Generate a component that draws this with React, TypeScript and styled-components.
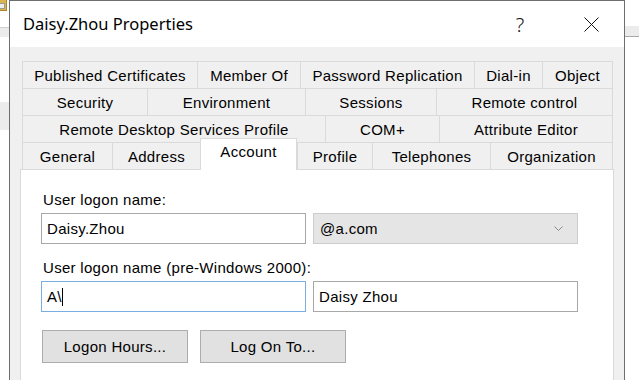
import React from 'react';
import styled, { createGlobalStyle } from 'styled-components';

const GlobalStyle = createGlobalStyle`
  html, body {
    margin: 0;
    padding: 0;
    background: #ffffff;
    overflow: hidden;
  }
`;

const Desktop = styled.div`
  position: relative;
  width: 639px;
  height: 380px;
  overflow: hidden;
  background: #ffffff;
  font-family: 'Liberation Sans', Arial, sans-serif;
`;

/* bits of the windows behind the dialog */
const BackIcon = styled.div`
  position: absolute;
  left: -4px;
  top: -2px;
  width: 11px;
  height: 13px;
  background: #d8b54e;
  border: 1px solid #a98523;
  box-sizing: border-box;

  &:after {
    content: '';
    position: absolute;
    left: 2px;
    top: 4px;
    width: 4px;
    height: 4px;
    background: #eeeeee;
    border: 1px solid #9a9a9a;
  }
`;

const BackBand = styled.div<{ $left: number; $width: number; $top: number; $height: number; $line?: 'top' | 'bottom' }>`
  position: absolute;
  left: ${p => p.$left}px;
  top: ${p => p.$top}px;
  width: ${p => p.$width}px;
  height: ${p => p.$height}px;
  background: #ececec;
  box-sizing: border-box;
  ${p => (p.$line === 'top' ? 'border-top: 1px solid #cfcfcf;' : '')}
  ${p => (p.$line === 'bottom' ? 'border-bottom: 1px solid #a9a9a9;' : '')}
`;

const Dialog = styled.div`
  position: absolute;
  left: 9px;
  top: 0;
  width: 616px;
  height: 420px;
  box-sizing: border-box;
  border: 1px solid #6e6e6e;
  background: #f0f0f0;
  display: flex;
  flex-direction: column;
`;

const TitleBar = styled.div`
  height: 46px;
  flex-shrink: 0;
  background: #ffffff;
  display: flex;
  align-items: center;
  padding-left: 13px;
`;

const Title = styled.div`
  flex: 1;
  font-family: 'Noto Sans', 'Open Sans', sans-serif;
  font-size: 16.5px;
  color: #000000;
  margin-top: -1px;
`;

const CaptionButton = styled.div`
  height: 46px;
  display: flex;
  align-items: center;
  justify-content: center;
  font-family: 'Noto Sans', sans-serif;
  font-size: 20px;
  font-weight: 300;
  color: #111111;
`;

const HelpButton = styled(CaptionButton)`
  width: 44px;
  margin-right: 27px;
`;

const CloseButton = styled(CaptionButton)`
  width: 44px;
  margin-right: 11px;
`;

const Body = styled.div`
  flex: 1;
  padding: 14px 10px 0 10px;
  display: flex;
  flex-direction: column;
`;

const TabStrip = styled.div`
  margin-left: 2px;
  display: flex;
  flex-direction: column;
`;

const TabRow = styled.div`
  display: flex;
  height: 27px;
`;

const Tab = styled.div<{ $w: number; $active?: boolean }>`
  width: ${p => p.$w}px;
  box-sizing: border-box;
  flex-shrink: 0;
  display: flex;
  align-items: center;
  justify-content: center;
  border-top: 1px solid #dadada;
  border-left: 1px solid #dadada;
  background: ${p => (p.$active ? '#ffffff' : '#f0f0f0')};
  font-size: 15px;
  letter-spacing: 0.3px;
  color: #000000;
  white-space: nowrap;
  position: relative;

  &:last-child {
    border-right: 1px solid #dadada;
  }

  ${p =>
    p.$active
      ? `
    height: 32px;
    margin-top: -4px;
    margin-bottom: -1px;
    padding-bottom: 6px;
    border-right: 1px solid #dadada;
    z-index: 2;
  `
      : ''}
`;

const Panel = styled.div`
  flex: 1;
  background: #ffffff;
  border: 1px solid #dadada;
  padding: 21px 0 0 20px;
  display: flex;
  flex-direction: column;
  position: relative;
  z-index: 1;
`;

const Label = styled.div<{ $gap?: number }>`
  font-size: 15px;
  letter-spacing: 0.3px;
  line-height: 18px;
  padding-left: 2px;
  margin-top: ${p => p.$gap ?? 0}px;
  color: #000000;
`;

const FieldRow = styled.div`
  display: flex;
  gap: 7px;
  margin-top: 4px;
`;

const TextBox = styled.div<{ $focused?: boolean }>`
  width: 265px;
  height: 31px;
  box-sizing: border-box;
  border: 1px solid ${p => (p.$focused ? '#7aaee0' : '#a8a8a8')};
  background: #ffffff;
  display: flex;
  align-items: center;
  padding-left: 5px;
  font-size: 15px;
  letter-spacing: 0.3px;
  color: #000000;
`;

const Caret = styled.span`
  display: inline-block;
  width: 1px;
  height: 18px;
  background: #000000;
`;

const ComboBox = styled.div`
  width: 265px;
  height: 31px;
  box-sizing: border-box;
  border: 1px solid #cccccc;
  background: #e5e5e5;
  display: flex;
  align-items: center;
  justify-content: space-between;
  padding: 0 14px 0 6px;
  font-size: 15px;
  letter-spacing: 0.3px;
  color: #000000;
`;

const ButtonRow = styled.div`
  display: flex;
  gap: 12px;
  margin-top: 18px;
  margin-left: 1px;
`;

const PushButton = styled.div`
  width: 146px;
  height: 33px;
  box-sizing: border-box;
  border: 1px solid #adadad;
  background: #e1e1e1;
  display: flex;
  align-items: center;
  justify-content: center;
  font-size: 15px;
  letter-spacing: 0.3px;
  color: #000000;
`;

const tabRows: { label: string; w: number; active?: boolean }[][] = [
  [
    { label: 'Published Certificates', w: 175 },
    { label: 'Member Of', w: 103 },
    { label: 'Password Replication', w: 174 },
    { label: 'Dial-in', w: 68 },
    { label: 'Object', w: 71 },
  ],
  [
    { label: 'Security', w: 125 },
    { label: 'Environment', w: 158 },
    { label: 'Sessions', w: 131 },
    { label: 'Remote control', w: 177 },
  ],
  [
    { label: 'Remote Desktop Services Profile', w: 303 },
    { label: 'COM+', w: 114 },
    { label: 'Attribute Editor', w: 174 },
  ],
  [
    { label: 'General', w: 90 },
    { label: 'Address', w: 88 },
    { label: 'Account', w: 97, active: true },
    { label: 'Profile', w: 75 },
    { label: 'Telephones', w: 118 },
    { label: 'Organization', w: 123 },
  ],
];

const App: React.FC = () => {
  return (
    <>
      <GlobalStyle />
      <Desktop>
        <BackIcon />
        <BackBand $left={0} $width={9} $top={27} $height={10} $line="top" />
        <BackBand $left={0} $width={9} $top={102} $height={28} />
        <BackBand $left={625} $width={14} $top={26} $height={11} $line="bottom" />

        <Dialog>
          <TitleBar>
            <Title>Daisy.Zhou Properties</Title>
            <HelpButton>?</HelpButton>
            <CloseButton>
              <svg width="15" height="15" viewBox="0 0 15 15">
                <path d="M0.5 0.5 L14.5 14.5 M14.5 0.5 L0.5 14.5" stroke="#111" strokeWidth="1" fill="none" />
              </svg>
            </CloseButton>
          </TitleBar>

          <Body>
            <TabStrip>
              {tabRows.map((row, i) => (
                <TabRow key={i}>
                  {row.map(t => (
                    <Tab key={t.label} $w={t.w} $active={t.active}>
                      {t.label}
                    </Tab>
                  ))}
                </TabRow>
              ))}
            </TabStrip>

            <Panel>
              <Label>User logon name:</Label>
              <FieldRow>
                <TextBox>Daisy.Zhou</TextBox>
                <ComboBox>
                  <span>@a.com</span>
                  <svg width="9" height="6" viewBox="0 0 9 6">
                    <path d="M0.5 0.5 L4.5 4.5 L8.5 0.5" stroke="#8a8a8a" strokeWidth="1" fill="none" />
                  </svg>
                </ComboBox>
              </FieldRow>

              <Label $gap={15}>User logon name (pre-Windows 2000):</Label>
              <FieldRow>
                <TextBox $focused>
                  A\<Caret />
                </TextBox>
                <TextBox>Daisy Zhou</TextBox>
              </FieldRow>

              <ButtonRow>
                <PushButton>Logon Hours...</PushButton>
                <PushButton>Log On To...</PushButton>
              </ButtonRow>
            </Panel>
          </Body>
        </Dialog>
      </Desktop>
    </>
  );
};

export default App;
